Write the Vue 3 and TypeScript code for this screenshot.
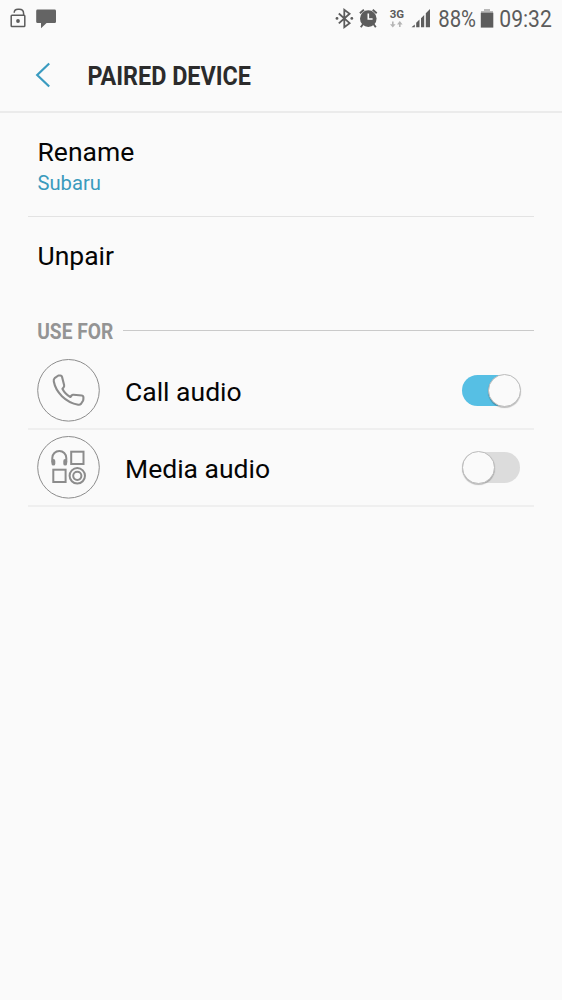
<script setup lang="ts">
import { ref } from 'vue'

interface Profile {
  id: 'call' | 'media'
  label: string
  enabled: boolean
}

const profiles = ref<Profile[]>([
  { id: 'call', label: 'Call audio', enabled: true },
  { id: 'media', label: 'Media audio', enabled: false },
])
</script>

<template>
  <div class="screen">
    <div class="status">
      <svg width="70" height="38" viewBox="0 0 70 38">
        <g fill="none" stroke="#5c5c5c" stroke-width="1.5">
          <rect x="11.2" y="15.2" width="13.6" height="11.4" rx="0.8" />
          <path d="M14.2 12.8C14.2 10.6 15.6 9.2 18 9.2H19.2C22 9.2 23.6 10.8 23.6 13.4V15" />
        </g>
        <circle cx="18" cy="21" r="1.9" fill="#5c5c5c" />
        <path d="M37.6 9.5H54.6Q56 9.5 56 10.9V21.7Q56 23.1 54.6 23.1H46.6L41 28.3V23.1H37.6Q36.2 23.1 36.2 21.7V10.9Q36.2 9.5 37.6 9.5Z" fill="#646464" />
      </svg>
      <svg width="232" height="38" viewBox="330 0 232 38">
        <g fill="none" stroke="#5c5c5c" stroke-width="1.8">
          <path d="M338.8 13.5L349.6 23.2L344.3 27.1V9.8L349.6 13.7L338.8 23.4" />
        </g>
        <circle cx="337" cy="18.4" r="1.4" fill="#5c5c5c" />
        <circle cx="351.8" cy="18.4" r="1.4" fill="#5c5c5c" />
        <circle cx="368.3" cy="18.6" r="8.3" fill="#5c5c5c" />
        <path d="M359.9 13.2L363.9 9.7M372.7 9.7L376.7 13.2M363.1 24L360.8 27.2M373.5 24L375.8 27.2" fill="none" stroke="#5c5c5c" stroke-width="1.9" />
        <path d="M368.3 13.5V19H372.6" fill="none" stroke="#fafafa" stroke-width="1.6" />
        <text class="network" x="389.7" y="18.2" textLength="14.4" lengthAdjust="spacingAndGlyphs">3G</text>
        <path d="M392.8 21.5V25M399.8 27V23.5" fill="none" stroke="#b5b5b5" stroke-width="1.6" />
        <path d="M390 24.2H395.6L392.8 27.5ZM397 24.4H402.6L399.8 21.1Z" fill="#b5b5b5" />
        <path d="M411.5 27.3L414.8 24.4V27.3ZM416.2 27.3V22.8L419.5 19.6V27.3ZM421 27.3V18.2L424.2 14.9V27.3ZM425.8 27.3V13.3L430 9V27.3Z" fill="#5c5c5c" />
        <text class="status-text" x="438.2" y="27.4" textLength="37.8" lengthAdjust="spacingAndGlyphs">88%</text>
        <path d="M484 9H490V11H493V14H481V11H484Z" fill="#b8b8b8" />
        <path d="M480.8 12.7H493.3V27.6H480.8Z" fill="#5c5c5c" />
        <text class="status-text" x="499.3" y="27.4" textLength="52.5" lengthAdjust="spacingAndGlyphs">09:32</text>
      </svg>
    </div>

    <header class="header">
      <svg class="back" width="20" height="28" viewBox="0 0 20 28">
        <path d="M15.2 2.5L3.2 14L15.2 25.5" fill="none" stroke="#3a9bc0" stroke-width="2.2" />
      </svg>
      <svg class="title" width="180" height="32" viewBox="0 0 180 32" role="heading">
        <text x="0.4" y="25.5" textLength="163.6" lengthAdjust="spacingAndGlyphs">PAIRED DEVICE</text>
      </svg>
    </header>

    <main>
      <div class="item rename">
        <div class="label">Rename</div>
        <div class="sub">Subaru</div>
      </div>
      <div class="item unpair">
        <div class="label">Unpair</div>
      </div>

      <div class="section">
        <svg width="78" height="25" viewBox="0 0 78 25">
          <text x="0.2" y="20.7" textLength="76" lengthAdjust="spacingAndGlyphs">USE FOR</text>
        </svg>
        <span class="rule"></span>
      </div>

      <div v-for="p in profiles" :key="p.id" class="profile">
        <svg width="64" height="64" viewBox="0 0 64 64" fill="none">
          <circle cx="31.5" cy="32.3" r="30.8" stroke="#8c8c8c" stroke-width="1" />
          <path
            v-if="p.id === 'call'"
            transform="translate(-0.6 0)"
            d="M18.2 20.2Q17 21.2 17.4 23.5C19.4 34 29 44.3 41.8 46.7Q43.5 47 44.5 46L46.6 42.7Q47 41.8 47 40.5V39Q46.8 37.7 45.5 37.5L37 36.7Q35.8 36.6 35.2 37.5L34 39Q28.5 36 26 30.8L27.2 29.3Q28 28.3 27.7 27L25.6 18.7Q25.3 17.5 24 17.5H22Z"
            stroke="#8c8c8c" stroke-width="2.1" stroke-linejoin="round"
          />
          <g v-else transform="translate(0 0.5)" stroke="#8c8c8c">
            <path d="M15.3 27V22.4A7 7 0 0 1 29.3 22.4V27" stroke-width="2" />
            <path d="M16.4 25.4V28.2M28.2 25.4V28.2" stroke-width="3.8" stroke-linecap="round" />
            <rect x="34.2" y="16.2" width="12.3" height="12.3" stroke-width="2" />
            <rect x="16.3" y="34.2" width="12.3" height="12.3" stroke-width="2" />
            <circle cx="40.3" cy="40.3" r="7.7" stroke-width="2" />
            <circle cx="40.3" cy="40.3" r="4.1" stroke-width="2" />
          </g>
        </svg>
        <span class="label">{{ p.label }}</span>
        <button
          class="toggle" :class="{ on: p.enabled }" role="switch"
          :aria-checked="p.enabled" :aria-label="p.label" @click="p.enabled = !p.enabled"
        >
          <span class="knob"></span>
        </button>
      </div>
    </main>
  </div>
</template>

<style>
body {
  margin: 0;
  background: #fafafa;
}
</style>

<style scoped>
.screen {
  width: 562px;
  height: 1000px;
  overflow: hidden;
  background: #fafafa;
  color: #050505;
  font-family: Roboto, "Liberation Sans", sans-serif;
}
svg {
  display: block;
  flex: none;
  overflow: visible;
}
.status {
  display: flex;
  justify-content: space-between;
  height: 38px;
}
.status-text {
  font-size: 23px;
  fill: #5c5c5c;
}
.network {
  font-size: 11.5px;
  font-weight: 700;
  fill: #5c5c5c;
}
.header {
  display: flex;
  align-items: center;
  box-sizing: border-box;
  height: 75px;
  padding: 1px 0 0 34px;
  border-bottom: 2px solid #ebebeb;
}
.title {
  margin-left: 33px;
}
.title text {
  font-size: 26px;
  font-weight: 700;
  fill: #2b2b2b;
}
.item {
  box-sizing: border-box;
  margin: 0 28px;
  padding-left: 9.5px;
}
.rename {
  height: 104px;
  padding-top: 23px;
  border-bottom: 1px solid #e3e3e3;
}
.unpair {
  height: 101px;
  padding-top: 23px;
}
.label {
  font-size: 26.5px;
  line-height: 32px;
}
.sub {
  font-size: 20.2px;
  line-height: 30px;
  color: #3a9bbd;
}
.section {
  display: flex;
  align-items: center;
  height: 25px;
  margin: 0 28px 0 37px;
}
.section text {
  font-size: 21.5px;
  font-weight: 700;
  fill: #949494;
}
.rule {
  flex: 1;
  height: 1px;
  margin-left: 8px;
  background: #cacaca;
}
.profile {
  display: flex;
  align-items: center;
  box-sizing: border-box;
  height: 77px;
  margin: 0 28px;
  padding: 0 14px 1px 9px;
  border-bottom: 2px solid #efefef;
}
.section + .profile {
  height: 87px;
  padding-top: 9px;
  padding-bottom: 0;
}
.profile .label {
  flex: 1;
  margin-left: 24px;
  padding-top: 3px;
}
.toggle {
  display: flex;
  align-items: center;
  width: 58px;
  height: 31px;
  padding: 0;
  border: 0;
  border-radius: 16px;
  background: #dcdcdc;
}
.toggle.on {
  justify-content: flex-end;
  background: #56bfe4;
}
.knob {
  flex: none;
  box-sizing: border-box;
  width: 33px;
  height: 33px;
  border: 1px solid #bcbcbc;
  border-radius: 50%;
  background: #fafafa;
  box-shadow: 0 1px 1px rgba(0, 0, 0, 0.25);
}
.toggle.on .knob {
  margin-right: -0.6px;
}
</style>
